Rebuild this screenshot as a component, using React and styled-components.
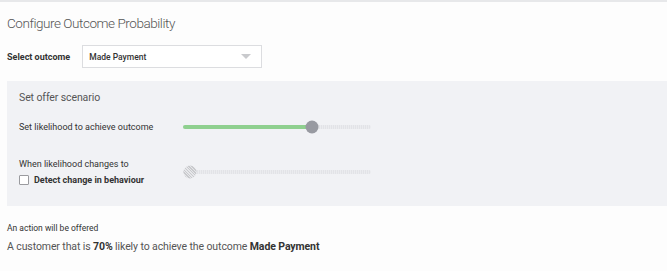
import React, { useState } from "react";
import styled, { createGlobalStyle } from "styled-components";

const GlobalStyle = createGlobalStyle`
  body {
    margin: 0;
    background: #fdfdfd;
    font-family: Roboto, "Liberation Sans", Arial, sans-serif;
    color: #333;
  }
`;

const Page = styled.div`
  width: 667px;
  height: 271px;
  box-sizing: border-box;
  border-top: 2px solid #e7e8ea;
  overflow: hidden;
`;

const Title = styled.h1`
  margin: 0;
  padding: 13px 7px 0;
  font-size: 13.5px;
  font-weight: 300;
  letter-spacing: -0.45px;
  color: #555;
  line-height: 17px;
`;

const OutcomeRow = styled.div`
  display: flex;
  align-items: center;
  gap: 12px;
  padding: 13px 7px 0;
`;

const Label = styled.span`
  font-size: 9px;
  font-weight: ${(p) => (p.bold ? 700 : 400)};
  color: #333;
`;

const Select = styled.div`
  box-sizing: border-box;
  width: 180px;
  height: 23px;
  border: 1px solid #dcdde0;
  background: #fff;
  display: flex;
  align-items: center;
  justify-content: space-between;
  padding: 0 10px 0 6px;
  font-size: 8.5px;
  font-weight: 500;
  color: #333;
`;

const Caret = styled.span`
  width: 0;
  height: 0;
  border-left: 5px solid transparent;
  border-right: 5px solid transparent;
  border-top: 5px solid #c9cacd;
`;

const Panel = styled.section`
  margin: 13px 0 0 7px;
  background: #f1f2f5;
  height: 125px;
  box-sizing: border-box;
  padding: 10px 12px 0;
`;

const PanelTitle = styled.div`
  font-size: 10.5px;
  letter-spacing: -0.1px;
  color: #555;
  line-height: 14px;
`;

const SliderRow = styled.div`
  display: grid;
  grid-template-columns: 164px 188px;
  align-items: center;
  margin-top: ${(p) => p.top}px;
`;

const LabelStack = styled.div`
  display: flex;
  flex-direction: column;
  gap: 6px;
`;

const CheckLine = styled.label`
  display: flex;
  align-items: center;
  gap: 5px;
`;

const Box = styled.span`
  width: 8px;
  height: 8px;
  border: 1px solid #9a9b9f;
  background: #fff;
  border-radius: 1px;
`;

const Track = styled.div`
  position: relative;
  height: 4px;
  border-radius: 2px;
  background: repeating-linear-gradient(
    90deg,
    #e2e3e7 0 1px,
    #ebecef 1px 2px
  );
`;

const Fill = styled.div`
  position: absolute;
  left: 0;
  top: 0;
  bottom: 0;
  border-radius: 2px;
  background: #8fd08f;
`;

const Thumb = styled.div`
  position: absolute;
  top: 50%;
  width: 13px;
  height: 13px;
  border-radius: 50%;
  transform: translate(-50%, -50%);
  background: ${(p) =>
    p.disabled
      ? "repeating-linear-gradient(45deg, #c9cacd 0 1px, #e6e7ea 1px 2px)"
      : "#989aa1"};
`;

const Footer = styled.div`
  padding: 16px 7px 0;
`;

const Note = styled.div`
  font-size: 8.5px;
  color: #333;
  line-height: 12px;
`;

const Summary = styled.div`
  margin-top: 6px;
  font-size: 10.5px;
  letter-spacing: -0.1px;
  color: #555;
  line-height: 14px;

  b {
    color: #333;
    font-weight: 700;
  }
`;

const TRACK_W = 188;
const THUMB = 13;

function Slider({ value, disabled }) {
  // thumb stays inside the track, like a native range input
  const pos = THUMB / 2 + (value / 100) * (TRACK_W - THUMB);
  return (
    <Track>
      {!disabled && <Fill style={{ width: `${pos}px` }} />}
      <Thumb disabled={disabled} style={{ left: `${pos}px` }} />
    </Track>
  );
}

export default function App() {
  const [likelihood] = useState(70);
  const outcome = "Made Payment";

  return (
    <Page>
      <GlobalStyle />
      <Title>Configure Outcome Probability</Title>
      <OutcomeRow>
        <Label bold>Select outcome</Label>
        <Select>
          {outcome}
          <Caret />
        </Select>
      </OutcomeRow>
      <Panel>
        <PanelTitle>Set offer scenario</PanelTitle>
        <SliderRow top={17}>
          <Label>Set likelihood to achieve outcome</Label>
          <Slider value={likelihood} />
        </SliderRow>
        <SliderRow top={27}>
          <LabelStack>
            <Label>When likelihood changes to</Label>
            <CheckLine>
              <Box />
              <Label bold>Detect change in behaviour</Label>
            </CheckLine>
          </LabelStack>
          <Slider value={0} disabled />
        </SliderRow>
      </Panel>
      <Footer>
        <Note>An action will be offered</Note>
        <Summary>
          A customer that is <b>{likelihood}%</b> likely to achieve the outcome{" "}
          <b>{outcome}</b>
        </Summary>
      </Footer>
    </Page>
  );
}
